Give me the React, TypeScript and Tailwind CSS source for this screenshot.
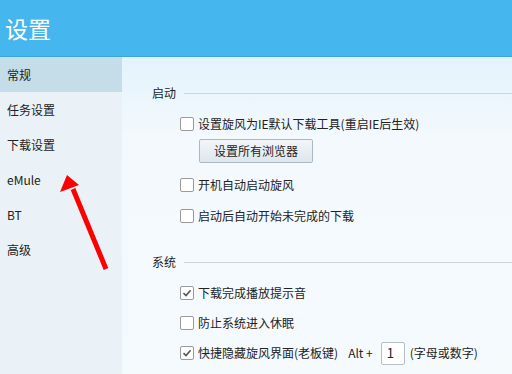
import React from 'react';

const font = { fontFamily: '"Noto Sans CJK SC", "Liberation Sans", sans-serif' };

const navItems = ['常规', '任务设置', '下载设置', 'eMule', 'BT', '高级'];

const CheckBox = ({ checked }: { checked?: boolean }) => (
  <span className="flex h-[14px] w-[14px] shrink-0 items-center justify-center rounded-[2px] border border-[#9a9a9a] bg-white">
    {checked && (
      <svg width="10" height="10" viewBox="0 0 10 10">
        <path d="M1.5 5.2 L4 7.6 L8.6 2.2" fill="none" stroke="#555" strokeWidth="1.6" />
      </svg>
    )}
  </span>
);

const Option = ({ label, checked, children }: { label: string; checked?: boolean; children?: React.ReactNode }) => (
  <div className="flex h-[14px] items-center gap-[4px] text-[12px] text-[#222]">
    <CheckBox checked={checked} />
    <span className="leading-none">{label}</span>
    {children}
  </div>
);

const SectionTitle = ({ title }: { title: string }) => (
  <div className="flex items-center gap-[8px] text-[12px] text-[#222]">
    <span className="leading-none">{title}</span>
    <div className="h-px flex-1 bg-[#cdd6dd]" />
  </div>
);

export default function App() {
  return (
    <div className="relative h-[374px] w-[512px] overflow-hidden" style={font}>
      <header className="flex h-[57px] items-center border-b border-[#3aa6dc] bg-[#45b7ee] pl-[5px]">
        <h1 className="text-[23px] leading-none text-white">设置</h1>
      </header>
      <div className="flex h-[317px]">
        <nav className="flex w-[122px] flex-col bg-[#eaf2f8]">
          {navItems.map((item, i) => (
            <div
              key={item}
              className={`flex h-[35px] items-center pl-[7px] text-[12px] text-[#222] ${i === 0 ? 'bg-[#c4dde9]' : ''}`}
            >
              {item}
            </div>
          ))}
        </nav>
        <main className="flex flex-1 flex-col bg-gradient-to-b from-[#e3f3fc] via-[#f3f9fd] via-[25%] to-[#f5fafd] pl-[30px]">
          <div className="mt-[30px]">
            <SectionTitle title="启动" />
          </div>
          <div className="flex flex-col pl-[28px]">
            <div className="mt-[18px]">
              <Option label="设置旋风为IE默认下载工具(重启IE后生效)" />
            </div>
            <button className="ml-[19px] mt-[8px] flex h-[24px] w-[114px] items-center justify-center rounded-[2px] border border-[#acb8c2] bg-gradient-to-b from-[#f3f6f9] to-[#dde6ee] text-[12px] text-[#222]">
              设置所有浏览器
            </button>
            <div className="mt-[15px]">
              <Option label="开机自动启动旋风" />
            </div>
            <div className="mt-[17px]">
              <Option label="启动后自动开始未完成的下载" />
            </div>
          </div>
          <div className="mt-[33px]">
            <SectionTitle title="系统" />
          </div>
          <div className="flex flex-col pl-[28px]">
            <div className="mt-[18px]">
              <Option label="下载完成播放提示音" checked />
            </div>
            <div className="mt-[16px]">
              <Option label="防止系统进入休眠" />
            </div>
            <div className="mt-[16px]">
              <Option label="快捷隐藏旋风界面(老板键)" checked>
                <span className="ml-[6px] leading-none">Alt +</span>
                <span className="ml-[4px] flex h-[23px] w-[24px] items-center rounded-[2px] border border-[#b5c0c8] bg-white pl-[5px] text-[13px]">1</span>
                <span className="ml-[1px] leading-none">(字母或数字)</span>
              </Option>
            </div>
          </div>
        </main>
      </div>
      <svg className="absolute left-0 top-0" width="512" height="374" viewBox="0 0 512 374">
        <line x1="106" y1="269" x2="73" y2="189" stroke="#ff0000" strokeWidth="5" />
        <polygon points="67,175 60,192 79,185" fill="#ff0000" />
      </svg>
    </div>
  );
}
